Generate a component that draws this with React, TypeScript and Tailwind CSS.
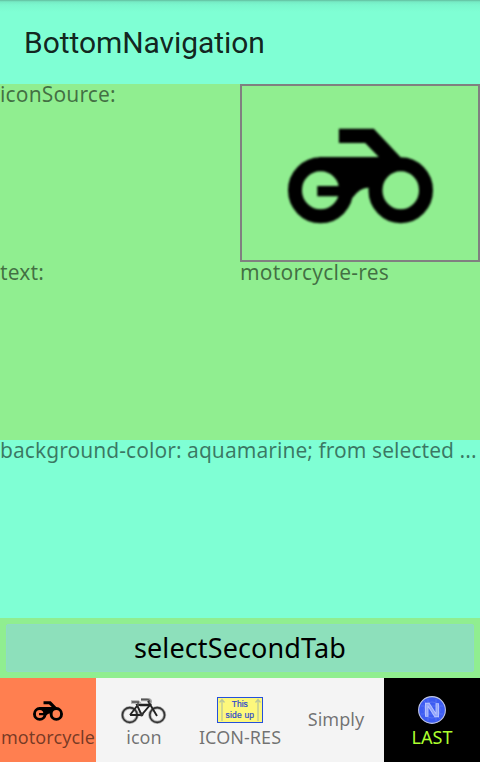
import React from "react";

const noto = "font-['Noto_Sans','Open_Sans',sans-serif]";

function Motorcycle({ className }: { className: string }) {
  return (
    <svg viewBox="172 158 436 288" preserveAspectRatio="none" overflow="visible" className={className}>
      <g fill="none" stroke="#000" strokeWidth="42">
        <ellipse cx="270" cy="345" rx="77" ry="78" />
        <ellipse cx="511" cy="345" rx="76" ry="78" />
      </g>
      <path d="M325 160H430L510 245V270A76 78 0 0 0 435 345L412 337Q388 337 366 367L345 358V363H260V332H325Q322 303 300 290L265 268V245H445L404 203H325Z" />
    </svg>
  );
}

function Bicycle() {
  return (
    <svg viewBox="0 0 46 26" className="block h-[26px] w-[46px]" fill="none" stroke="#222">
      <g stroke="#aaa" strokeWidth="3.2">
        <circle cx="8.8" cy="17" r="7.4" />
        <circle cx="36.2" cy="17" r="7.4" />
      </g>
      <g stroke="#333" strokeWidth="1.6">
        <circle cx="8.8" cy="17" r="7.4" />
        <circle cx="36.2" cy="17" r="7.4" />
      </g>
      <path d="M10 4H17L20 7H29M20 1.5H26Q31 1.5 28.5 6" stroke="#aaa" strokeWidth="3.4" />
      <path d="M9 17L16 8M9 17H20.5L29 7H16L20.5 17M27 3L36 18" strokeWidth="1.9" />
      <path d="M11 4H18M17 4L17 8M20 1.5H26Q30 2 28 5" strokeWidth="1.5" stroke="#555" />
      <circle cx="20.5" cy="16.5" r="2" fill="#333" stroke="none" />
    </svg>
  );
}

function ThisSideUp() {
  return (
    <svg viewBox="0 0 46 26" className="block h-[26px] w-[46px]">
      <rect x=".5" y=".5" width="45" height="25" fill="#fdf87c" stroke="#2450dc" />
      <path d="M5 24V3M2.5 5.5L5 2.5L7.5 5.5M41 24V3M38.5 5.5L41 2.5L43.5 5.5" fill="none" stroke="#b9c79c" strokeWidth="1.3" />
      <g fill="#2947cd" stroke="#2947cd" strokeWidth=".2" fontFamily="Liberation Sans, Arial, sans-serif" fontSize="8.5" textAnchor="middle">
        <text x="22.8" y="9.8">This</text>
        <text x="22.8" y="20.8" textLength="28.5">side up</text>
      </g>
    </svg>
  );
}

function NativeLogo() {
  return (
    <svg viewBox="0 0 28 28" className="block size-7">
      <circle cx="14" cy="14" r="13.4" fill="#3d5cf2" stroke="#bfc5e2" strokeWidth="1.1" />
      <path d="M3 10H25M3 18H25M10 3V25M18 3V25M6 5L22 23" stroke="#667ff5" strokeWidth=".6" />
      <circle cx="14" cy="14" r="8" fill="none" stroke="#667ff5" strokeWidth=".6" />
      <path d="M8.7 20.8V8.5H10.5L17.5 19.5H19.3V7.2" fill="none" stroke="#b9c5ff" strokeWidth="3.4" />
      <path d="M8.7 20V8.5H10.5L17.5 19.5H19.3V8" fill="none" stroke="#93a5fb" strokeWidth="1.7" />
    </svg>
  );
}

function Tab({ label, icon, className = "", labelClass = "text-black/55" }: {
  label: string; icon?: React.ReactNode; className?: string; labelClass?: string;
}) {
  return (
    <div className={`flex h-21 w-24 flex-col items-center overflow-hidden ${className}`}>
      {icon && <div className="flex h-[49px] shrink-0 items-end">{icon}</div>}
      <div className={`whitespace-nowrap text-[18px] leading-[24px] tracking-[0.06px] ${icon ? "-mt-[2px]" : "mt-[29px]"} ${labelClass}`}>
        {label}
      </div>
    </div>
  );
}

export default function App() {
  return (
    <div className={`flex h-[762px] w-[480px] flex-col overflow-hidden bg-[#90ee90] ${noto}`}>
      <header className="flex h-21 shrink-0 items-center bg-[#7fffd4] bg-[linear-gradient(to_bottom,#60b99b_0px,#6ed9b6_1px,#76ecc5_2px,#7bf7ce_5px,#7fffd4_12px)] pt-[2px] pl-6">
        <h1 className="whitespace-nowrap font-['Roboto',sans-serif] text-[30px] leading-[36px] tracking-[-0.06px] text-black/87">BottomNavigation</h1>
      </header>
      <main className="grid h-[534px] shrink-0 grid-cols-2 grid-rows-3 text-[21px] leading-[20px] tracking-[0.05px] text-black/54">
        <div className="tracking-[0.15px]">iconSource:</div>
        <div className="flex items-center justify-center border-2 border-[#808080] pt-[5px]">
          <Motorcycle className="block h-24 w-[145px] blur-[0.8px]" />
        </div>
        <div className="tracking-[0.15px]">text:</div>
        <div className="tracking-[0.22px]">motorcycle-res</div>
        <div className="col-span-2 whitespace-nowrap bg-[#7fffd4]">background-color: aquamarine; from selected ...</div>
      </main>
      <div className="flex h-15 shrink-0 px-[6px] pt-[6px] pb-[6px]">
        <button className="flex-1 rounded-[2px] border border-[#8fdcc4] bg-[#8de0bb] text-[27px] leading-[36px] tracking-[0.12px] text-black">selectSecondTab</button>
      </div>
      <nav className="flex h-21 shrink-0 bg-[#f4f4f4]">
        <Tab label="motorcycle" className="bg-[#ff7f50]" icon={<Motorcycle className="mb-[6px] block h-5 w-[30px]" />} />
        <Tab label="icon" icon={<div className="mb-[3px]"><Bicycle /></div>} />
        <Tab label="ICON-RES" icon={<div className="mb-[4px]"><ThisSideUp /></div>} />
        <Tab label="Simply" />
        <Tab label="LAST" className="bg-black" labelClass="text-[#adff2f]" icon={<div className="mb-[3px]"><NativeLogo /></div>} />
      </nav>
    </div>
  );
}
